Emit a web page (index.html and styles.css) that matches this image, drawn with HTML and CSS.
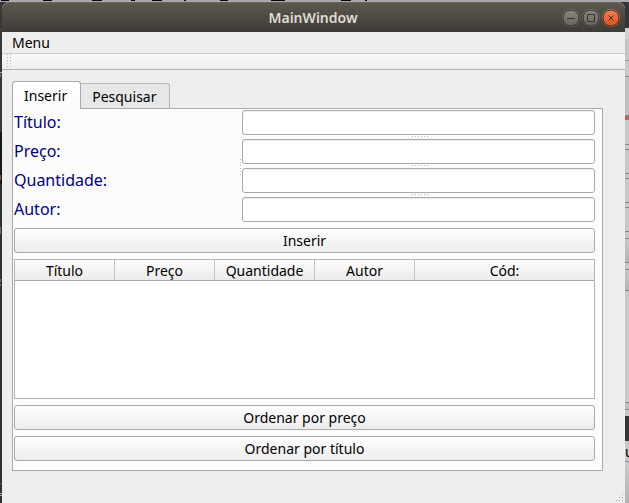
FILE: index.html
```html
<!DOCTYPE html>
<html lang="pt">
<head>
<meta charset="utf-8">
<title>MainWindow</title>
<link rel="stylesheet" href="styles.css">
</head>
<body>
<div class="desktop">
  <div class="behind-top">
    <svg width="400" height="2" aria-hidden="true"><path d="M1 .5h8M43 .5h9M92 .5h10M131 .5h4M152 .5h10M184 .5h2M220 .5h8M271 .5h14M341 .5h10M365 .5h2" stroke="#050505"/></svg>
  </div>
  <div class="behind-left">
    <svg width="2" height="503" aria-hidden="true"><path d="M0 27.500h2M0 481.500h2" stroke="#555"/><path d="M0 70.500h2M0 72v3M0 173v5M0 225v7M0 277v3M0 282v2M0 491.500h2M0 493.500h2" stroke="#aaa"/></svg>
  </div>
  <main class="window">
    <header class="titlebar">
      <h1 class="title">MainWindow</h1>
      <div class="controls">
        <button class="control" aria-label="Minimizar"><svg viewBox="0 0 18 18"><circle class="ring" cx="9" cy="9" r="8"/><path d="M5 9.500h8"/></svg></button>
        <button class="control" aria-label="Maximizar"><svg viewBox="0 0 18 18"><circle class="ring" cx="9" cy="9" r="8"/><path d="M5.500 5.500h7v7h-7z"/></svg></button>
        <button class="control close" aria-label="Fechar"><svg viewBox="0 0 18 18"><circle class="ring" cx="9" cy="9" r="8"/><path d="M6.500 6.500l5 5M11.500 6.500l-5 5"/></svg></button>
      </div>
    </header>
    <nav class="menubar"><button class="menu">Menu</button></nav>
    <div class="toolbar"><svg width="6" height="16" aria-hidden="true"><path d="M2.500 0v16M5.500 0v16" stroke="#b4b4b4" stroke-dasharray="1 2"/></svg></div>
    <div class="content">
      <div class="tabs" role="tablist">
        <button class="tab selected" role="tab" aria-selected="true">Inserir</button>
        <button class="tab" role="tab" aria-selected="false">Pesquisar</button>
      </div>
      <section class="panel" role="tabpanel">
        <form class="form">
          <div class="row"><label for="titulo">Título:</label><input id="titulo" type="text"></div>
          <div class="row"><label for="preco">Preço:</label><input id="preco" type="text"></div>
          <div class="row"><label for="quantidade">Quantidade:</label><input id="quantidade" type="text"></div>
          <div class="row"><label for="autor">Autor:</label><input id="autor" type="text"></div>
          <span class="splitter"></span>
        </form>
        <button class="action">Inserir</button>
        <div class="table-frame">
          <table>
            <thead><tr><th>Título</th><th>Preço</th><th>Quantidade</th><th>Autor</th><th class="last">Cód:</th></tr></thead>
            <tbody></tbody>
          </table>
        </div>
        <button class="action">Ordenar por preço</button>
        <button class="action">Ordenar por título</button>
      </section>
    </div>
    <svg class="size-grip" width="8" height="8" aria-hidden="true"><path d="M6 0h1v1h-1zM3 3h1v1h-1zM6 3h1v1h-1zM0 6h1v1h-1zM3 6h1v1h-1zM6 6h1v1h-1z" fill="#aaa"/></svg>
  </main>
  <div class="behind-right"><span class="behind-text">u</span></div>
</div>
</body>
</html>
```
FILE: styles.css
```css
* {
  box-sizing: border-box;
}

body {
  margin: 0;
  font-family: "Noto Sans", "Open Sans", sans-serif;
  font-size: 14px;
  color: #000;
}

button {
  font: inherit;
  color: inherit;
}

.desktop {
  display: grid;
  grid-template-columns: 2px 1fr 4px;
  grid-template-rows: 2px 1fr;
  height: 100vh;
  overflow: hidden;
  background: #2e2e30;
}

.behind-top {
  grid-column: 1 / -1;
  background: #a9a9ad;
  overflow: hidden;
}

.behind-top svg,
.behind-left svg {
  display: block;
}

.behind-left {
  overflow: hidden;
  background: linear-gradient(#38383b 130px, #181818 130px, #181818 182px, #303032 182px);
}

.behind-right {
  position: relative;
  overflow: hidden;
  background: linear-gradient(
    #353538 26px, #d2d2d2 26px, #d2d2d2 37px, #c4c4c4 37px, #c4c4c4 58px,
    #999 58px, #999 59px, #c9c9c9 59px, #c9c9c9 74px, #888 74px, #888 75px,
    #c0c0c0 75px, #c0c0c0 113px, #888 113px, #888 114px, #c95c5c 115px, #c95c5c 118px,
    #c8c8c8 118px, #c8c8c8 142px, #888 142px, #888 143px, #c8c8c8 143px, #c8c8c8 147px,
    #888 147px, #888 148px, #c8c8c8 148px, #c8c8c8 171px, #888 171px, #888 172px,
    #c8c8c8 172px, #c8c8c8 176px, #888 176px, #888 177px, #c8c8c8 177px, #c8c8c8 200px,
    #888 200px, #888 201px, #c8c8c8 201px, #c8c8c8 205px, #888 205px, #888 206px,
    #c8c8c8 206px, #c8c8c8 229px, #888 229px, #888 230px, #c8c8c8 230px, #c8c8c8 236px,
    #888 236px, #888 237px, #c8c8c8 237px, #b4b4b4 260px, #888 260px, #888 261px,
    #c8c8c8 261px, #c8c8c8 267px, #888 267px, #888 268px, #c8c8c8 268px, #b4b4b4 288px,
    #888 288px, #888 289px, #cacaca 289px, #cacaca 400px, #888 400px, #888 401px,
    #c0c0c0 401px, #c0c0c0 407px, #888 407px, #888 408px, #c8c8c8 408px, #c8c8c8 414px,
    #353538 414px, #353538 439px, #c8c8c8 439px, #c8c8c8 459px, #888 459px, #888 460px,
    #cacaca 460px, #b4b4b4 500px);
}

.behind-text {
  position: absolute;
  top: 440px;
  left: 0;
  line-height: 20px;
}

.window {
  position: relative;
  display: flex;
  flex-direction: column;
  min-width: 0;
  background: #eee;
  border-radius: 7px 7px 0 0;
}

.titlebar {
  display: grid;
  grid-template-columns: 1fr auto 1fr;
  align-items: center;
  height: 30px;
  padding: 0 5px 0 4px;
  background: linear-gradient(#5c584f, #3d3b36);
  border-top: 1px solid #686459;
  border-radius: 7px 7px 0 0;
}

.title {
  grid-column: 2;
  margin: 0;
  font-size: 14px;
  font-weight: 600;
  line-height: 20px;
  color: #dfdbd2;
}

.controls {
  display: flex;
  justify-content: flex-end;
  gap: 2px;
}

.control {
  width: 18px;
  height: 18px;
  padding: 0;
  border: 0;
  border-radius: 50%;
  background: linear-gradient(#8b8982, #63615b);
}

.control.close {
  background: linear-gradient(#f58462, #df4b16);
}

.control svg {
  display: block;
  fill: none;
  stroke: #36342f;
}

.menubar {
  display: flex;
  height: 22px;
  padding: 0 10px;
  border-bottom: 1px solid #cfcfcf;
}

.menu {
  padding: 0;
  border: 0;
  background: none;
  line-height: 20px;
}

.toolbar {
  display: flex;
  height: 16px;
  padding-left: 3px;
  overflow: hidden;
  background: linear-gradient(#f9f9f9, #eee);
  border-bottom: 1px solid #b4b4b4;
}

.content {
  flex: 1;
  display: flex;
  flex-direction: column;
  padding: 11px 22px 32px 10px;
}

.tabs {
  display: flex;
  align-items: flex-end;
}

.tab {
  height: 25px;
  padding: 2px 13px 0 11px;
  line-height: 20px;
  background: #e7e7e7;
  border: 1px solid #b8b8b8;
  border-left: 0;
  border-bottom: 0;
  border-radius: 0 3px 0 0;
}

.tab.selected {
  position: relative;
  z-index: 1;
  height: 28px;
  margin-bottom: -1px;
  padding-top: 0;
  background: linear-gradient(#fff, #fcfcfc);
  border: 1px solid #aaa;
  border-bottom: 0;
  border-radius: 3px 3px 0 0;
}

.panel {
  flex: 1;
  display: flex;
  flex-direction: column;
  gap: 6px;
  padding: 1px 7px 9px 1px;
  background: #fcfcfc;
  border: 1px solid #aaa;
}

.form {
  position: relative;
  display: flex;
  flex-direction: column;
  gap: 4px;
}

.row {
  position: relative;
  display: grid;
  grid-template-columns: 228fr 353fr;
}

.row label {
  font-size: 16px;
  line-height: 25px;
  color: #000080;
}

.row input {
  width: 100%;
  height: 25px;
  padding: 0 4px;
  font: inherit;
  background: #fff;
  border: 1px solid #aaa;
  border-radius: 3px;
  box-shadow: inset 0 1px #eee;
}

.row + .row::before {
  content: "";
  position: absolute;
  top: -3px;
  left: 398px;
  width: 16px;
  height: 1px;
  background: repeating-linear-gradient(90deg, #bbb 0 1px, transparent 1px 3px);
}

.splitter {
  position: absolute;
  top: 49px;
  left: 226px;
  width: 1px;
  height: 17px;
  background: repeating-linear-gradient(#bbb 0 1px, transparent 1px 3px);
}

.action {
  height: 25px;
  padding: 0;
  line-height: 20px;
  background: linear-gradient(#fff, #ececec);
  border: 1px solid #aaa;
  border-radius: 3px;
}

.table-frame {
  flex: 1;
  background: #fff;
  border: 1px solid #b4b4b4;
}

table {
  width: 100%;
  table-layout: fixed;
  border-collapse: separate;
  border-spacing: 0;
}

th {
  width: 100px;
  height: 21px;
  padding: 1px 0 0;
  font-weight: 400;
  line-height: 19px;
  background: linear-gradient(#fdfdfd, #ebebeb);
  border-right: 1px solid #c4c4c4;
  border-bottom: 1px solid #aaa;
}

.last {
  width: auto;
  border-right: 0;
}

.size-grip {
  position: absolute;
  right: 1px;
  bottom: 1px;
}
```
